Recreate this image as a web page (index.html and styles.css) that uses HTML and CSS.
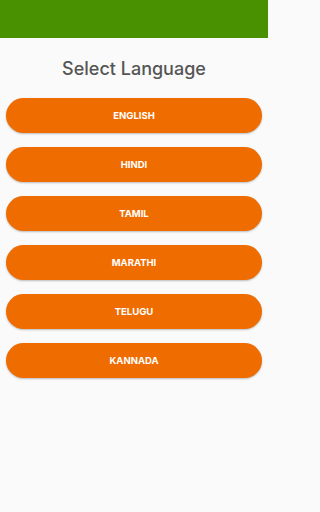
FILE: index.html
```
<!DOCTYPE html>
<html>
<head>
<meta charset="utf-8">
<meta name="viewport" content="width=device-width, initial-scale=1">
<link rel="stylesheet" href="styles.css">
</head>
<body>
<div class="appbar"></div>
<main class="content">
  <h1 class="title">Select Language</h1>
  <div class="list">
    <button class="lang">ENGLISH</button>
    <button class="lang">HINDI</button>
    <button class="lang">TAMIL</button>
    <button class="lang">MARATHI</button>
    <button class="lang">TELUGU</button>
    <button class="lang">KANNADA</button>
  </div>
</main>
</body>
</html>
```
FILE: styles.css
```
html, body {
  margin: 0;
  padding: 0;
  background: #fafafa;
  font-family: Inter, "Noto Sans", sans-serif;
  height: 100%;
}
body {
  width: 268px;
}
.appbar {
  height: 38px;
  background: #4a9102;
}
.content {
  padding: 0 6px;
}
.title {
  margin: 0;
  padding-top: 20px;
  height: 40px;
  box-sizing: border-box;
  text-align: center;
  font-size: 18px;
  font-weight: 500;
  color: #555555;
  line-height: 22px;
}
.list {
  margin-top: 20px;
  display: flex;
  flex-direction: column;
  gap: 14px;
}
.lang {
  height: 35px;
  border: none;
  border-radius: 18px;
  background: #ef6c00;
  color: #ffffff;
  font-family: Inter, "Noto Sans", sans-serif;
  font-size: 9.5px;
  font-weight: 700;
  box-shadow: 0 1px 2px rgba(0,0,0,0.25);
  padding: 0;
}
```
